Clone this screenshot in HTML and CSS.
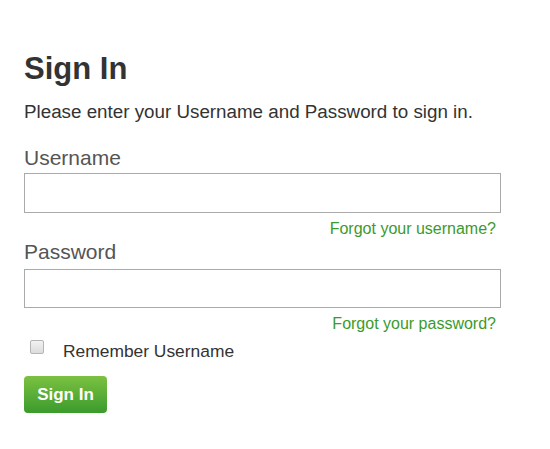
FILE: index.html
```html
<!DOCTYPE html>
<html>
<head>
<meta charset="utf-8">
<link rel="stylesheet" href="styles.css">
</head>
<body>
<form class="signin">
  <h1 class="title">Sign In</h1>
  <p class="intro">Please enter your Username and Password to sign in.</p>
  <label class="label label-first" for="u">Username</label>
  <input class="field" id="u" type="text">
  <div class="forgot"><a href="#">Forgot your username?</a></div>
  <label class="label" for="p">Password</label>
  <input class="field field-second" id="p" type="password">
  <div class="forgot"><a href="#">Forgot your password?</a></div>
  <div class="remember">
    <span class="check"></span>
    <span class="remember-text">Remember Username</span>
  </div>
  <button class="btn" type="button">Sign In</button>
</form>
</body>
</html>
```
FILE: styles.css
```css
html, body {
  margin: 0;
  padding: 0;
  background: #fff;
}
body {
  font-family: "Liberation Sans", Arial, sans-serif;
  color: #333;
}
.signin {
  display: flex;
  flex-direction: column;
  align-items: flex-start;
  padding: 51px 49px 0 24px;
}
.title {
  margin: 0;
  font-size: 31px;
  font-weight: bold;
  line-height: 36px;
  color: #333;
}
.intro {
  margin: 14px 0 0;
  font-size: 18.8px;
  line-height: 22px;
  color: #333;
}
.label {
  margin-top: 2px;
  font-size: 21px;
  line-height: 24px;
  color: #555;
}
.label-first {
  margin-top: 23px;
}
.field {
  box-sizing: border-box;
  width: 477px;
  height: 40px;
  margin: 3px 0 0;
  border: 1px solid #aaa;
  background: #fff;
  padding: 0 8px;
}
.field-second {
  margin-top: 5px;
  height: 39px;
}
.forgot {
  align-self: stretch;
  text-align: right;
  padding-right: 5px;
  margin-top: 7px;
  font-size: 16px;
  line-height: 18px;
}
.forgot a {
  color: #3b9a2d;
  text-decoration: none;
}
.remember {
  display: flex;
  align-items: flex-start;
  margin-top: 7px;
  padding-left: 6px;
}
.check {
  box-sizing: border-box;
  width: 14px;
  height: 14px;
  border: 1px solid #b5b5b5;
  border-radius: 2px;
  background: linear-gradient(#f2f2f2, #dcdcdc);
}
.remember-text {
  margin: 1px 0 0 19px;
  font-size: 17.4px;
  line-height: 20px;
  color: #333;
}
.btn {
  margin-top: 15px;
  width: 83px;
  height: 37px;
  border: 0;
  border-radius: 4px;
  background: linear-gradient(#7cc142, #3a9b2c);
  color: #fff;
  font-family: "Liberation Sans", Arial, sans-serif;
  font-size: 17px;
  font-weight: bold;
  padding: 0;
}
```
